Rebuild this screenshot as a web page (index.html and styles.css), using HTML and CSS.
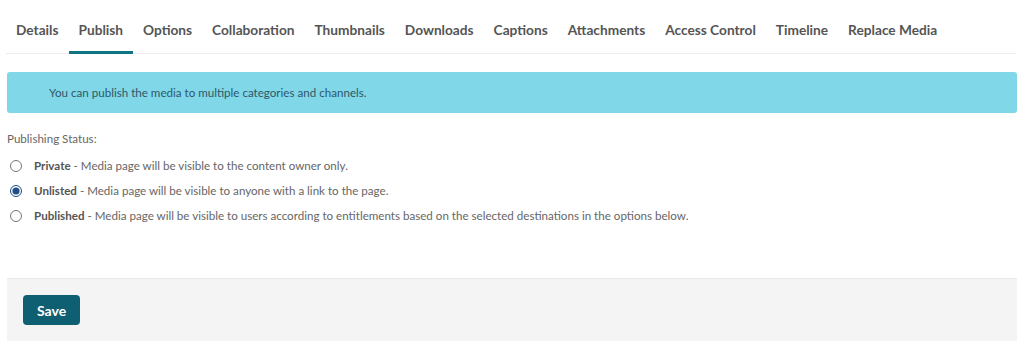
FILE: index.html
```html
<!DOCTYPE html>
<html lang="en">

<head>
    <meta charset="UTF-8">
    <meta name="viewport" content="width=device-width, initial-scale=1.0">
    <title>Edit Media - Publish</title>
    <link rel="stylesheet" href="styles.css">
</head>

<body>
    <div class="container">
        <ul class="tabs">
            <li><a href="#">Details</a></li>
            <li class="active"><a href="#">Publish</a></li>
            <li><a href="#">Options</a></li>
            <li><a href="#">Collaboration</a></li>
            <li><a href="#">Thumbnails</a></li>
            <li><a href="#">Downloads</a></li>
            <li><a href="#">Captions</a></li>
            <li><a href="#">Attachments</a></li>
            <li><a href="#">Access Control</a></li>
            <li><a href="#">Timeline</a></li>
            <li><a href="#">Replace Media</a></li>
        </ul>

        <div class="alert">You can publish the media to multiple categories and channels.</div>

        <div class="status">
            <p class="status-title">Publishing Status:</p>
            <label class="radio">
                <input type="radio" name="status" value="private">
                <span><b>Private</b> - Media page will be visible to the content owner only.</span>
            </label>
            <label class="radio">
                <input type="radio" name="status" value="unlisted" checked>
                <span><b>Unlisted</b> - Media page will be visible to anyone with a link to the page.</span>
            </label>
            <label class="radio">
                <input type="radio" name="status" value="published">
                <span><b>Published</b> - Media page will be visible to users according to entitlements based on the selected destinations in the options below.</span>
            </label>
        </div>

        <div class="form-actions">
            <button type="button">Save</button>
        </div>
    </div>
</body>

</html>
```

FILE: styles.css
```css
body {
    font-family: Lato, "Open Sans", sans-serif;
    background-color: #fff;
    color: #666;
    margin: 0;
    padding: 0;
}

.container {
    margin: 0 7px;
    width: 1010px;
}

.tabs {
    list-style: none;
    margin: 0;
    padding: 0;
    display: flex;
    border-bottom: 1px solid #ececec;
    margin-left: -1px;
    margin-right: 1px;
}

.tabs li {
    margin: 0 0 -1px 0;
}

.tabs a {
    display: block;
    padding: 20px 10px 11px;
    font-size: 13.7px;
    font-weight: bold;
    line-height: 20px;
    color: #555;
    text-decoration: none;
    white-space: nowrap;
    border-bottom: 3px solid transparent;
}

.tabs .active a {
    border-bottom-color: #0f7584;
}

.alert {
    margin-top: 18px;
    background-color: #80d7e8;
    color: #2f5868;
    font-size: 11.6px;
    line-height: 18px;
    padding: 12px 42px 11px;
    border-radius: 3px;
}

.status {
    margin-top: 17px;
    font-size: 11.6px;
    line-height: 18px;
}

.status-title {
    margin: 0 0 9px 0;
}

.radio {
    display: flex;
    align-items: center;
    margin-bottom: 7px;
}

.radio input {
    margin: 0 12px 0 3px;
    width: 12px;
    height: 12px;
    accent-color: #1f4f86;
}

.radio b {
    color: #555;
}

.form-actions {
    margin-top: 53px;
    background-color: #f4f4f4;
    border-top: 1px solid #e9e9e9;
    padding: 16px;
}

button {
    font-family: Lato, sans-serif;
    font-size: 14px;
    font-weight: bold;
    color: #fff;
    background-color: #0f5f73;
    border: none;
    border-radius: 4px;
    padding: 6px 14px;
    height: 30px;
    cursor: pointer;
}
```
